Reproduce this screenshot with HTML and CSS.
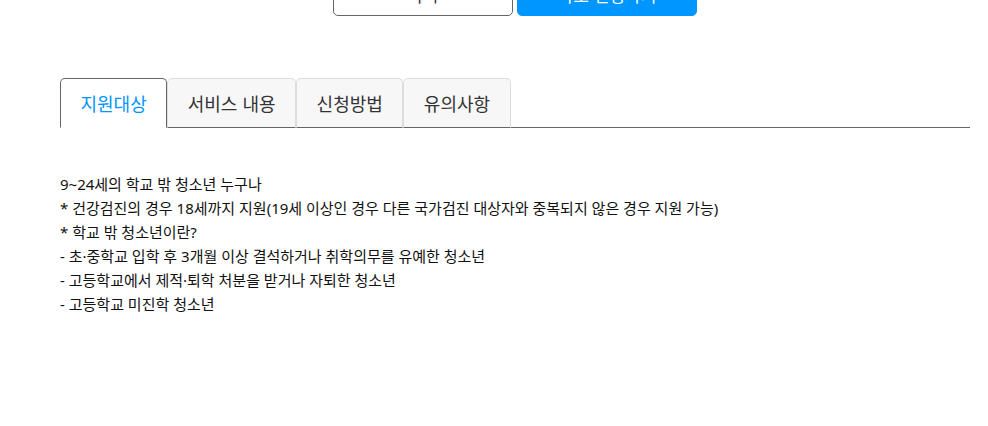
FILE: index.html
```html
<!DOCTYPE html>
<html lang="ko">
<head>
    <meta charset="UTF-8">
    <meta name="viewport" content="width=device-width, initial-scale=1.0">
    <title>학교 밖 청소년 지원</title>
    <link rel="stylesheet" href="styles.css">
</head>
<body>
    <div class="btn-area">
        <a class="btn btn-line" href="#">목록</a>
        <a class="btn btn-blue" href="#">바로 신청하기</a>
    </div>

    <div class="tabs">
        <ul class="tab-list">
            <li class="tab active">지원대상</li>
            <li class="tab">서비스 내용</li>
            <li class="tab">신청방법</li>
            <li class="tab">유의사항</li>
        </ul>
    </div>

    <div class="tab-content">
        <p>9~24세의 학교 밖 청소년 누구나</p>
        <p>* 건강검진의 경우 18세까지 지원(19세 이상인 경우 다른 국가검진 대상자와 중복되지 않은 경우 지원 가능)</p>
        <p>* 학교 밖 청소년이란?</p>
        <p>- 초·중학교 입학 후 3개월 이상 결석하거나 취학의무를 유예한 청소년</p>
        <p>- 고등학교에서 제적·퇴학 처분을 받거나 자퇴한 청소년</p>
        <p>- 고등학교 미진학 청소년</p>
    </div>
</body>
</html>
```

FILE: styles.css
```css
body {
    font-family: "Noto Sans CJK KR", "Noto Sans", sans-serif;
    color: #111;
    background-color: #fff;
    margin: 0;
    padding: 0;
}
.btn-area {
    display: flex;
    gap: 4px;
    padding-left: 333px;
    margin-top: -34px;
}
.btn {
    display: block;
    box-sizing: border-box;
    width: 180px;
    height: 50px;
    padding-top: 8px;
    line-height: 40px;
    text-align: center;
    font-size: 17px;
    text-decoration: none;
    border-radius: 5px;
}
.btn-line {
    border: 1px solid #666;
    color: #333;
    background-color: #fff;
}
.btn-blue {
    border: 1px solid #0096ff;
    color: #fff;
    background-color: #0096ff;
}
.tabs {
    margin: 62px 18px 0 60px;
    border-bottom: 1px solid #666;
}
.tab-list {
    display: flex;
    list-style: none;
    margin: 0;
    padding: 0;
}
.tab {
    box-sizing: border-box;
    height: 50px;
    line-height: 48px;
    padding: 0 19.5px;
    margin-bottom: -1px;
    font-size: 18px;
    color: #333;
    background-color: #f7f7f7;
    border: 1px solid #ddd;
    border-bottom: 1px solid #666;
    border-radius: 5px 5px 0 0;
}
.tab.active {
    color: #0096ff;
    background-color: #fff;
    border-color: #666;
    border-bottom-color: #fff;
}
.tab-content {
    margin: 44px 0 0 60px;
    font-family: "Noto Sans", "Noto Sans CJK KR", sans-serif;
    font-size: 15px;
    line-height: 24px;
}
.tab-content p {
    margin: 0;
}
```
